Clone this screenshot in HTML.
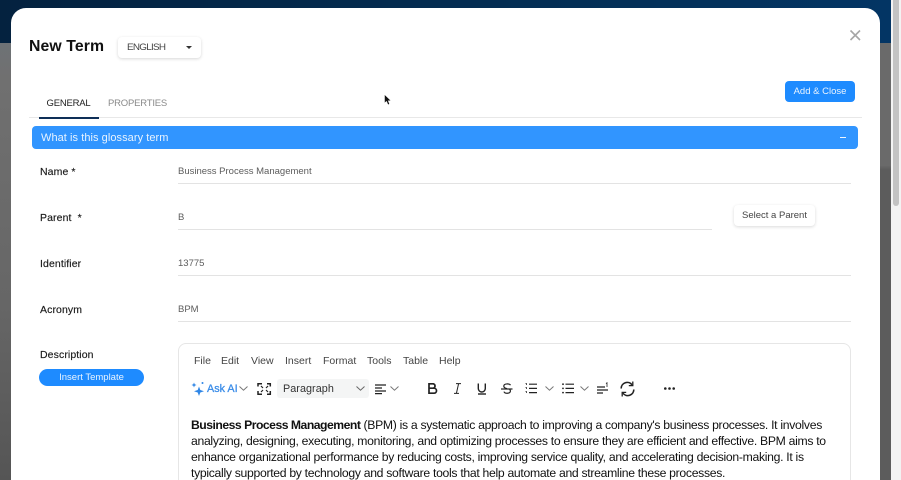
<!DOCTYPE html>
<html><head><meta charset="utf-8">
<style>
html,body{margin:0;padding:0;width:901px;height:480px;overflow:hidden;background:#666}
body{position:relative;font-family:"Liberation Sans",sans-serif;color:#111}
.a{position:absolute;white-space:nowrap}
.l{font-size:10.5px;color:#1a1a1a;letter-spacing:.1px;-webkit-text-stroke:.15px #1a1a1a}
.v{font-size:9.5px;color:#5c5c5c;letter-spacing:0}
.u{position:absolute;height:1px;background:#e3e3e3}
.m{font-size:10.5px;color:#444;top:355px;letter-spacing:0}
.p{font-size:12.2px;color:#111;left:191px;letter-spacing:-.3px}
.p b{letter-spacing:-.5px}
svg{position:absolute;overflow:visible}
</style></head>
<body>
<div class="a" style="left:0;top:0;width:891px;height:43px;background:linear-gradient(90deg,#04223f,#043058 70%,#033564)"></div>
<div class="a" style="left:0;top:43px;width:11px;height:437px;background:linear-gradient(#6e7276,#707070 8%,#666 60%,#555)"></div>
<div class="a" style="left:880px;top:43px;width:11px;height:437px;background:linear-gradient(#6a6a6a,#6a6a6a 28%,#5c5c5c 29%,#5c5c5c)"></div>
<div class="a" style="left:891px;top:0;width:10px;height:480px;background:#f3f3f3"></div>
<div class="a" style="left:893px;top:0;width:6px;height:206px;background:#c3c3c3;border-radius:0 0 3px 3px"></div>

<div class="a" style="left:11px;top:8px;width:869px;height:490px;background:#fff;border-radius:15px"></div>

<div class="a" style="left:29px;top:38px;font-size:15.8px;font-weight:bold;color:#111;letter-spacing:.1px;line-height:18px">New Term</div>
<div class="a" style="left:118px;top:37px;width:83px;height:21px;background:#fff;border-radius:4px;box-shadow:0 1px 3px rgba(0,0,0,.16)"></div>
<div class="a" style="left:127px;top:42px;font-size:9.5px;color:#444;letter-spacing:-.7px;transform-origin:left;transform:scaleX(1.04)">ENGLISH</div>
<svg style="left:186px;top:46px" width="7" height="4"><path d="M0 0H6L3 3Z" fill="#333"/></svg>

<svg style="left:850px;top:30px" width="11" height="11"><path d="M.5 .5L10 10M10 .5L.5 10" stroke="#a6a6a6" stroke-width="1.6" fill="none"/></svg>

<div class="a" style="left:785px;top:81px;width:70px;height:21px;background:#1e8bff;border-radius:4px;color:#eaf4ff;font-size:9.5px;line-height:22px;text-align:center;letter-spacing:0">Add &amp; Close</div>

<div class="a" style="left:46.5px;top:97px;font-size:9.5px;color:#222;letter-spacing:-.2px;line-height:13px">GENERAL</div>
<div class="a" style="left:108px;top:97px;font-size:9.5px;color:#8a8a8a;letter-spacing:-.2px;line-height:13px">PROPERTIES</div>
<div class="u" style="left:29px;top:117px;width:833px;background:#e8e8e8"></div>
<div class="a" style="left:39px;top:117px;width:60px;height:1.5px;background:#0e2f57"></div>

<div class="a" style="left:32px;top:126px;width:826px;height:23px;background:#3195ff;border-radius:4px"></div>
<div class="a" style="left:41px;top:132px;font-size:11px;color:#e8f3ff;letter-spacing:.06px">What is this glossary term</div>
<div class="a" style="left:840px;top:137px;width:6px;height:1px;background:#eef6ff"></div>

<div class="a l" style="left:40px;top:166px">Name *</div>
<div class="a v" style="left:178px;top:166px">Business Process Management</div>
<div class="u" style="left:178px;top:183px;width:673px"></div>

<div class="a l" style="left:40px;top:212px">Parent &nbsp;*</div>
<div class="a v" style="left:178px;top:212px">B</div>
<div class="u" style="left:178px;top:229px;width:534px"></div>
<div class="a" style="left:734px;top:205px;width:81px;height:21px;background:#fff;border-radius:4px;box-shadow:0 1px 3px rgba(0,0,0,.15);font-size:9.5px;color:#444;line-height:22px;text-align:center;letter-spacing:0">Select a Parent</div>

<div class="a l" style="left:40px;top:258px">Identifier</div>
<div class="a v" style="left:178px;top:258px">13775</div>
<div class="u" style="left:178px;top:275px;width:673px"></div>

<div class="a l" style="left:40px;top:304px">Acronym</div>
<div class="a v" style="left:178px;top:304px">BPM</div>
<div class="u" style="left:178px;top:321px;width:673px"></div>

<div class="a l" style="left:40px;top:349px">Description</div>
<div class="a" style="left:39px;top:369px;width:105px;height:17px;background:#1e8bff;border-radius:9px;color:#e8f3ff;font-size:9.5px;line-height:18px;text-align:center;letter-spacing:0">Insert Template</div>

<div class="a" style="left:178px;top:343px;width:671px;height:150px;border:1px solid #e6e6e6;border-radius:8px;background:#fff"></div>

<div class="a m" style="left:194px">File</div>
<div class="a m" style="left:221px">Edit</div>
<div class="a m" style="left:251px">View</div>
<div class="a m" style="left:285px">Insert</div>
<div class="a m" style="left:323px">Format</div>
<div class="a m" style="left:367px">Tools</div>
<div class="a m" style="left:403px">Table</div>
<div class="a m" style="left:439px">Help</div>

<svg style="left:191px;top:381px" width="14" height="16" fill="#2f86e6"><path d="M8 5.5L9.3 9 13 10.2 9.3 11.5 8 15 6.7 11.5 3 10.2 6.7 9Z"/><path d="M3 1.5L3.7 3.3 5.5 4 3.7 4.7 3 6.5 2.3 4.7 .5 4 2.3 3.3Z"/><circle cx="11.5" cy="2" r="1"/></svg>
<div class="a" style="left:207px;top:383px;font-size:10.8px;color:#3c8de8;letter-spacing:0;-webkit-text-stroke:.3px #3c8de8">Ask AI</div>
<svg style="left:239px;top:386px" width="9" height="5"><path d="M.5 .5L4.5 4.2 8.5 .5" stroke="#777" fill="none"/></svg>
<svg style="left:258px;top:383px" width="13" height="12" stroke="#222" stroke-width="1.5" fill="none"><path d="M0 3.5V.7H4M9 .7H12.3V3.5M0 8V11.3H4M9 11.3H12.3V8"/><path d="M3 3L5 5M10 3L8 5M3 9L5 7M10 9L8 7" stroke-width="1.2"/></svg>
<div class="a" style="left:277px;top:379px;width:92px;height:19px;background:#f4f5f5;border-radius:3px"></div>
<div class="a" style="left:283px;top:383px;font-size:10.8px;color:#333;letter-spacing:.05px">Paragraph</div>
<svg style="left:356px;top:386px" width="9" height="5"><path d="M.5 .5L4.5 4.2 8.5 .5" stroke="#666" fill="none"/></svg>
<svg style="left:375px;top:384px" width="12" height="10" stroke="#222" stroke-width="1.2"><path d="M0 1H11M0 4H7M0 7H11M0 9.6H7"/></svg>
<svg style="left:390px;top:386px" width="9" height="5"><path d="M.5 .5L4.5 4.2 8.5 .5" stroke="#777" fill="none"/></svg>

<svg style="left:428px;top:383px" width="10" height="11" fill="none" stroke="#222" stroke-width="1.7"><path d="M1 .8H5.4A2.3 2.3 0 0 1 5.4 5.2H1V.8ZM1 5.2H6A2.5 2.5 0 0 1 6 10.2H1V5.2Z"/></svg>
<svg style="left:454px;top:383px" width="7" height="11" fill="none" stroke="#222" stroke-width="1"><path d="M2 .6H7M0 10.4H5M4.6 .6L2.4 10.4" /></svg>
<svg style="left:477px;top:383px" width="10" height="12" fill="none" stroke="#222" stroke-width="1.4"><path d="M1.3 .5V5.5A3.5 3.5 0 0 0 8.3 5.5V.5"/><path d="M1 11H9"/></svg>
<svg style="left:501px;top:383px" width="12" height="12" fill="none" stroke="#222" stroke-width="1.2"><path d="M9.5 2.2C8.7 .6 3 .1 2.8 3 2.7 5 5 5.3 6 5.7M3 8.6C3.6 10.8 9.3 11 9.4 8 9.4 7.2 9 6.7 8.6 6.3"/><path d="M0 6H11.5"/></svg>
<svg style="left:525px;top:383px" width="12" height="11" stroke="#222" stroke-width="1.2" fill="#222"><path d="M4 1.2H12M4 5.4H12M4 9.6H12"/><path d="M.5 .6H1.6V2M.5 4.6H1.6V6M.5 8.6H1.6V10" stroke-width=".8" fill="none"/></svg>
<svg style="left:545px;top:386px" width="9" height="5"><path d="M.5 .5L4.5 4.2 8.5 .5" stroke="#777" fill="none"/></svg>
<svg style="left:562px;top:383px" width="12" height="11" stroke="#222" stroke-width="1.2" fill="#222"><path d="M3.5 1.2H12M3.5 5.4H12M3.5 9.6H12"/><circle cx="1" cy="1.2" r=".9" stroke="none"/><circle cx="1" cy="5.4" r=".9" stroke="none"/><circle cx="1" cy="9.6" r=".9" stroke="none"/></svg>
<svg style="left:580px;top:386px" width="9" height="5"><path d="M.5 .5L4.5 4.2 8.5 .5" stroke="#777" fill="none"/></svg>
<svg style="left:597px;top:382px" width="12" height="12" stroke="#222" stroke-width="1.2"><path d="M0 5H8M0 8H11M0 11H6"/><path d="M9 1.5L10 .8V5" stroke-width=".8" fill="none"/></svg>
<svg style="left:620px;top:381px" width="15" height="16" stroke="#222" stroke-width="1.6" fill="none"><path d="M1.2 7.5A6 6 0 0 1 12 3.8M13.8 8.5A6 6 0 0 1 3 12.2"/><path d="M12.8 .5V4.6H8.8M2.2 15.5V11.4H6.2" stroke-width="1.3"/></svg>
<svg style="left:664px;top:387px" width="11" height="3" fill="#222"><circle cx="1.3" cy="1.5" r="1.3"/><circle cx="5.5" cy="1.5" r="1.3"/><circle cx="9.7" cy="1.5" r="1.3"/></svg>

<div class="a p" style="top:418px"><b>Business Process Management</b> (BPM) is a systematic approach to improving a company's business processes. It involves</div>
<div class="a p" style="top:434px">analyzing, designing, executing, monitoring, and optimizing processes to ensure they are efficient and effective. BPM aims to</div>
<div class="a p" style="top:450px">enhance organizational performance by reducing costs, improving service quality, and accelerating decision-making. It is</div>
<div class="a p" style="top:466px">typically supported by technology and software tools that help automate and streamline these processes.</div>

<svg style="left:384px;top:94px" width="8" height="12"><path d="M.5 .5V9L2.5 7.3 4 10.8 5.6 10 4.2 6.8H7Z" fill="#111" stroke="#fff" stroke-width=".5"/></svg>
</body></html>
